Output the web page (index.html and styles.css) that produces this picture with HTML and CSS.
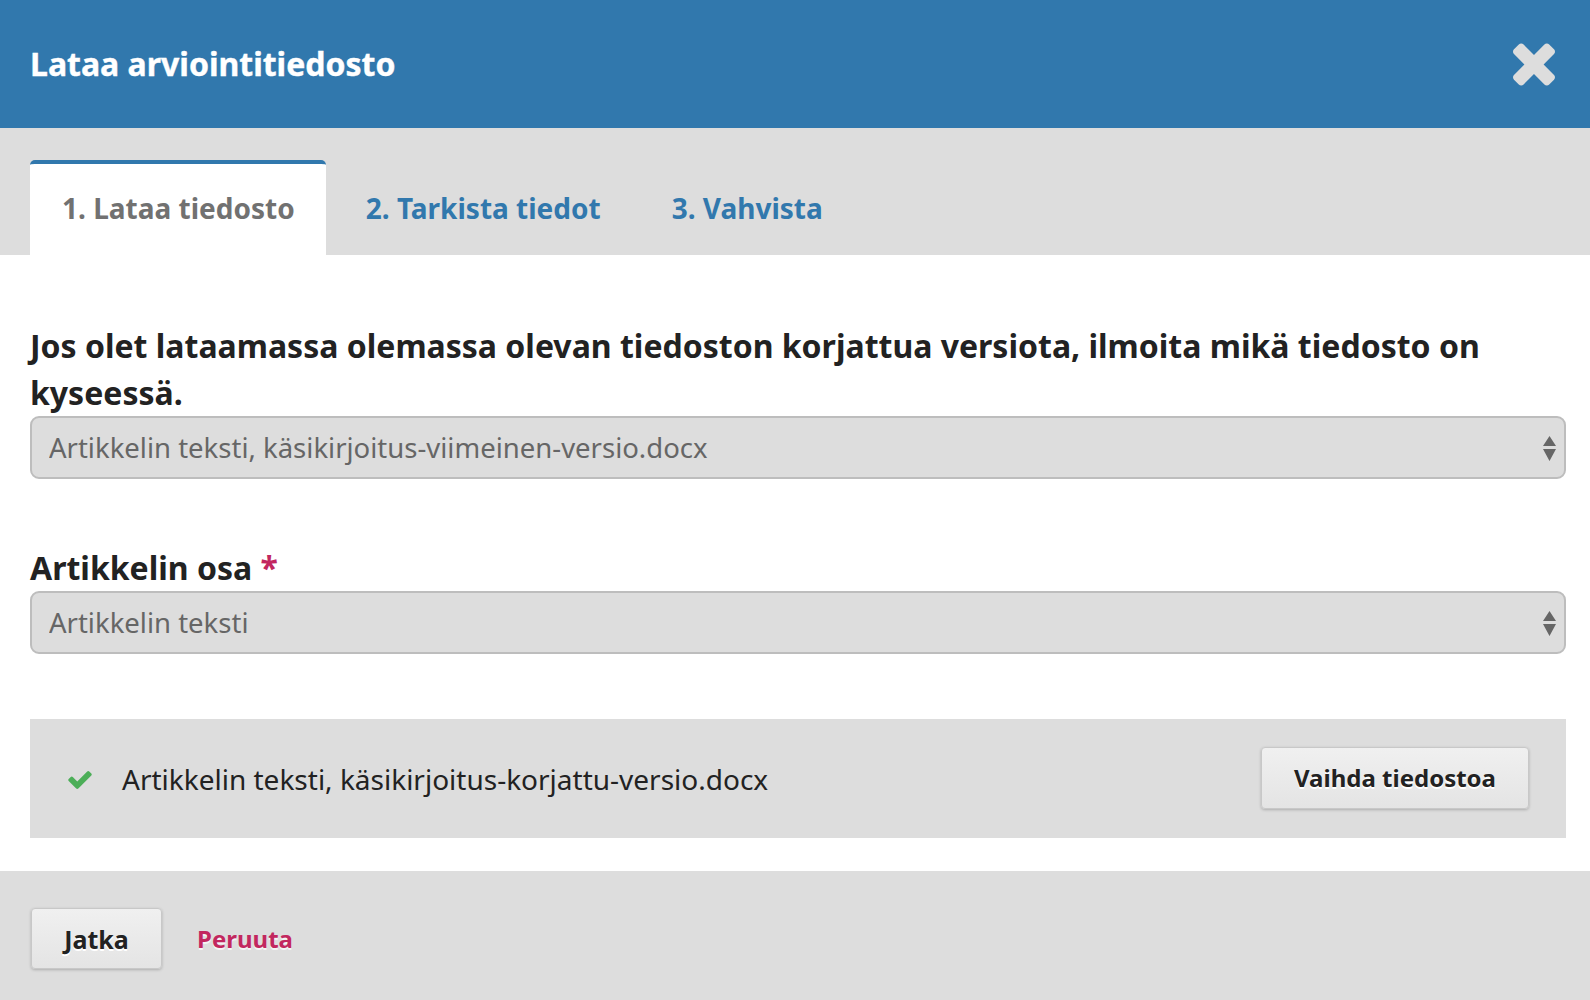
FILE: index.html
```html
<!DOCTYPE html>
<html lang="fi">
<head>
<meta charset="utf-8">
<title>Lataa arviointitiedosto</title>
<link rel="stylesheet" href="styles.css">
</head>
<body>
<div class="modal">
  <header class="modal-header">
    <h1 class="modal-title">Lataa arviointitiedosto</h1>
    <button class="close" type="button" aria-label="Sulje">
      <svg viewBox="110 366 1188 1188" width="42" height="43" aria-hidden="true"><path fill="#dddddd" d="M1298 1322q0 40-28 68l-136 136q-28 28-68 28t-68-28l-294-294-294 294q-28 28-68 28t-68-28l-136-136q-28-28-28-68t28-68l294-294-294-294q-28-28-28-68t28-68l136-136q28-28 68-28t68 28l294 294 294-294q28-28 68-28t68 28l136 136q28 28 28 68t-28 68l-294 294 294 294q28 28 28 68z"/></svg>
    </button>
  </header>

  <nav class="tabs">
    <div class="tab active">1. Lataa tiedosto</div>
    <div class="tab">2. Tarkista tiedot</div>
    <div class="tab">3. Vahvista</div>
  </nav>

  <main class="modal-body">
    <div class="form-group">
      <label class="label">Jos olet lataamassa olemassa olevan tiedoston korjattua versiota, ilmoita mikä tiedosto on kyseessä.</label>
      <div class="select-wrap">
        <select class="select">
          <option>Artikkelin teksti, käsikirjoitus-viimeinen-versio.docx</option>
        </select>
        <svg class="arrows" viewBox="0 0 13 25" width="13" height="25" aria-hidden="true"><path fill="#666" d="M6.5 0L13 10H0z M0 13h13L6.5 25z"/></svg>
      </div>
    </div>

    <div class="form-group">
      <label class="label">Artikkelin osa <span class="req">*</span></label>
      <div class="select-wrap">
        <select class="select">
          <option>Artikkelin teksti</option>
        </select>
        <svg class="arrows" viewBox="0 0 13 25" width="13" height="25" aria-hidden="true"><path fill="#666" d="M6.5 0L13 10H0z M0 13h13L6.5 25z"/></svg>
      </div>
    </div>

    <div class="file-panel">
      <svg class="check" viewBox="121 334 1550 1188" width="24" height="18" aria-hidden="true"><path fill="#4cae58" d="M1671 566q0 40-28 68l-724 724-136 136q-28 28-68 28t-68-28l-136-136-362-362q-28-28-28-68t28-68l136-136q28-28 68-28t68 28l294 295 656-657q28-28 68-28t68 28l136 136q28 28 28 68z"/></svg>
      <span class="file-name">Artikkelin teksti, käsikirjoitus-korjattu-versio.docx</span>
      <button class="btn btn-change" type="button">Vaihda tiedostoa</button>
    </div>
  </main>

  <footer class="modal-footer">
    <button class="btn btn-continue" type="button">Jatka</button>
    <a class="cancel" href="#">Peruuta</a>
  </footer>
</div>
</body>
</html>
```

FILE: styles.css
```css
* { box-sizing: border-box; }

html, body {
  margin: 0;
  padding: 0;
  background: #ffffff;
}

body {
  font-family: "Noto Sans", "Open Sans", "DejaVu Sans", sans-serif;
  color: #222222;
  width: 1590px;
  height: 1000px;
  overflow: hidden;
}

.modal {
  display: flex;
  flex-direction: column;
  height: 1000px;
}

.modal-header {
  height: 128px;
  background: #3178ad;
  display: flex;
  align-items: center;
  justify-content: space-between;
  padding: 0 35px 0 30px;
}

.modal-title {
  margin: 0;
  font-size: 32px;
  font-weight: 700;
  color: #ffffff;
  line-height: 1;
  -webkit-text-stroke: 0.4px #ffffff;
}

.close {
  border: 0;
  background: transparent;
  padding: 0;
  margin: 0;
  display: flex;
  cursor: pointer;
}

.tabs {
  height: 127px;
  background: #dddddd;
  display: flex;
  align-items: flex-end;
  padding-left: 30px;
  gap: 8px;
}

.tab {
  font-size: 28px;
  font-weight: 700;
  line-height: 34px;
  color: #3178ad;
  padding: 27px 31px 30px 32px;
  border-top: 4px solid transparent;
  border-radius: 5px 5px 0 0;
}

.tab.active {
  background: #ffffff;
  color: #717171;
  border-top-color: #3178ad;
}

.modal-body {
  padding: 67px 24px 33px 30px;
}

.form-group {
  margin-bottom: 65px;
}

.label {
  display: block;
  font-size: 32px;
  font-weight: 700;
  line-height: 47px;
  color: #222222;
}

.req {
  color: #c2275f;
}

.select-wrap {
  position: relative;
}

.select {
  display: block;
  width: 100%;
  height: 63px;
  -webkit-appearance: none;
  appearance: none;
  background: #dddddd;
  border: 2px solid #bdbdbd;
  border-radius: 9px;
  font-family: "Noto Sans", "Open Sans", sans-serif;
  font-size: 27.5px;
  color: #666666;
  padding: 0 60px 0 17px;
  outline: none;
}

.arrows {
  position: absolute;
  right: 10px;
  top: 20px;
  pointer-events: none;
}

.file-panel {
  background: #dddddd;
  height: 119px;
  display: flex;
  align-items: center;
  padding: 0 37px 0 38px;
}

.check {
  flex: none;
  margin-right: 30px;
  margin-top: 2px;
}

.file-name {
  font-size: 28px;
  color: #222222;
  flex: 1;
}

.btn {
  font-family: "Noto Sans", "Open Sans", sans-serif;
  font-weight: 700;
  color: #222222;
  background: linear-gradient(#f0f0f0, #e4e4e4);
  border: 1px solid #c8c8c8;
  border-radius: 4px;
  box-shadow: 0 1px 3px rgba(0, 0, 0, 0.22);
  text-shadow: 0 2px 0 #ffffff;
  cursor: pointer;
}

.btn-change {
  width: 268px;
  height: 62px;
  font-size: 24px;
  margin-top: -2px;
}

.modal-footer {
  flex: 1;
  background: #dddddd;
  display: flex;
  align-items: flex-start;
  padding: 37px 30px 0 31px;
}

.btn-continue {
  width: 131px;
  height: 61px;
  font-size: 25px;
}

.cancel {
  margin-left: 35px;
  font-size: 24px;
  font-weight: 700;
  color: #c2275f;
  text-decoration: none;
  line-height: 61px;
  text-shadow: 0 2px 0 #f4f4f4;
}
```
